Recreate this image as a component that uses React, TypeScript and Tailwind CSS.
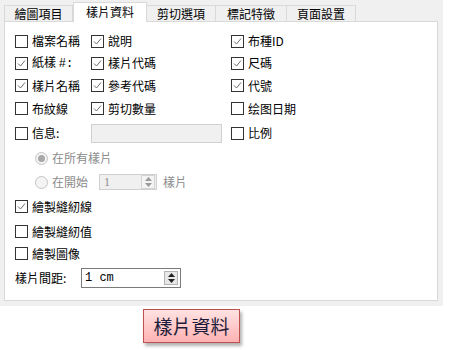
const font = { fontFamily: '"Noto Sans CJK TC", "Liberation Sans", sans-serif' };

function Check({ on }: { on?: boolean }) {
  return (
    <span className="w-[13px] h-[13px] border border-[#333333] bg-white shrink-0 mr-[4px] flex items-center justify-center">
      {on && (
        <svg width="11" height="11" viewBox="0 0 11 11">
          <path d="M2 5.5 L4.5 8 L9 2.5" fill="none" stroke="#707070" strokeWidth="1" />
        </svg>
      )}
    </span>
  );
}

function Box({ label, on }: { label: string; on?: boolean }) {
  return (
    <div className="flex items-center">
      <Check on={on} />
      <span className="whitespace-nowrap">{label}</span>
    </div>
  );
}

function Radio({ on }: { on?: boolean }) {
  return (
    <span className="w-[13px] h-[13px] rounded-full border border-[#c4c4c4] bg-[#f4f4f4] shrink-0 mr-[4px] flex items-center justify-center">
      {on && <span className="w-[7px] h-[7px] rounded-full bg-[#a8a8a8]" />}
    </span>
  );
}

function Spin({ dim }: { dim?: boolean }) {
  return (
    <span
      className={
        "w-[14px] h-[14px] flex flex-col items-center justify-center gap-[2px] border " +
        (dim ? "border-[#d4d4d4] bg-[#f4f4f4]" : "border-[#b4b4b4] bg-[#e8e8e8]")
      }
    >
      <svg width="7" height="4" viewBox="0 0 7 4">
        <path d="M0 4 L3.5 0 L7 4 Z" fill={dim ? "#9a9a9a" : "#222"} />
      </svg>
      <svg width="7" height="4" viewBox="0 0 7 4">
        <path d="M0 0 L3.5 4 L7 0 Z" fill={dim ? "#9a9a9a" : "#222"} />
      </svg>
    </span>
  );
}

const tabs = ["繪圖項目", "樣片資料", "剪切選項", "標記特徵", "頁面設置"];
const widths = ["w-[69px]", "w-[74px]", "w-[70px]", "w-[72px]", "w-[70px]"];

export default function App() {
  return (
    <div className="w-[452px] h-[350px] bg-white text-[12px] text-black" style={font}>
      <div className="w-[443px] h-[306px] bg-[#f0f0f0] pt-[2px] pl-[4px]">
        <div className="flex items-end h-[19px] pl-[1px]">
          {tabs.map((t, i) =>
            i === 1 ? (
              <div
                key={t}
                className={widths[i] + " h-[20px] -mb-px relative z-10 bg-white border border-b-0 border-[#d9d9d9] flex items-center justify-center pb-[2px]"}
              >
                {t}
              </div>
            ) : (
              <div
                key={t}
                className={widths[i] + " h-[16px] bg-[#f0f0f0] border border-b-0 border-[#d9d9d9] -ml-px flex items-center justify-center"}
              >
                {t}
              </div>
            )
          )}
        </div>
        <div className="w-[434px] h-[280px] border border-[#d9d9d9] bg-white pt-[8px] pl-[10px]">
          <div className="grid grid-cols-[76px_140px_1fr]">
            <div className="h-[22px] flex items-center"><Box label="檔案名稱" /></div>
            <div className="h-[22px] flex items-center"><Box label="說明" on /></div>
            <div className="h-[22px] flex items-center"><Box label="布種ID" on /></div>

            <div className="h-[22px] flex items-center">
              <Check on />
              <span className="whitespace-nowrap">紙樣 <span style={{ fontFamily: '"Liberation Mono", monospace' }}>#:</span></span>
            </div>
            <div className="h-[22px] flex items-center"><Box label="樣片代碼" on /></div>
            <div className="h-[22px] flex items-center"><Box label="尺碼" on /></div>

            <div className="h-[23px] flex items-center"><Box label="樣片名稱" on /></div>
            <div className="h-[23px] flex items-center"><Box label="參考代碼" on /></div>
            <div className="h-[23px] flex items-center"><Box label="代號" on /></div>

            <div className="h-[23px] flex items-center"><Box label="布紋線" /></div>
            <div className="h-[23px] flex items-center"><Box label="剪切數量" on /></div>
            <div className="h-[23px] flex items-center"><Box label="绘图日期" /></div>

            <div className="h-[26px] flex items-center"><Box label="信息:" /></div>
            <div className="h-[26px] flex items-center">
              <div className="w-[131px] h-[19px] bg-[#f0f0f0] border border-[#d0d0d0]" />
            </div>
            <div className="h-[26px] flex items-center"><Box label="比例" /></div>
          </div>

          <div className="h-[24px] flex items-center pl-[20px] text-[#8c8c8c]">
            <Radio on />
            <span>在所有樣片</span>
          </div>
          <div className="h-[24px] flex items-center pl-[20px] text-[#8c8c8c]">
            <Radio />
            <span className="w-[47px]">在開始</span>
            <div className="w-[58px] h-[16px] bg-[#f0f0f0] border border-[#d0d0d0] flex items-center justify-between pl-[4px] pr-[1px]">
              <span style={{ fontFamily: '"Liberation Serif", serif' }}>1</span>
              <Spin dim />
            </div>
            <span className="ml-[6px]">樣片</span>
          </div>

          <div className="h-[25px] flex items-center"><Box label="繪製縫紉線" on /></div>
          <div className="h-[25px] flex items-center"><Box label="繪製縫紉值" /></div>
          <div className="h-[19px] flex items-center"><Box label="繪製圖像" /></div>
          <div className="h-[30px] flex items-center">
            <span className="w-[66px]">樣片間距:</span>
            <div className="w-[100px] h-[20px] bg-white border border-[#7a7a7a] flex items-center justify-between pl-[3px] pr-[2px]">
              <span style={{ fontFamily: '"Liberation Mono", monospace' }}>1 cm</span>
              <Spin />
            </div>
          </div>
        </div>
      </div>
      <div className="ml-[143px] mt-[3px] w-[97px] h-[34px] border border-[#c0504d] bg-gradient-to-b from-[#ffe2e2] to-[#ffb2b2] shadow-[2px_3px_3px_rgba(0,0,0,0.3)] flex items-center justify-center text-[19px] text-[#1c1c3a]">
        樣片資料
      </div>
    </div>
  );
}
